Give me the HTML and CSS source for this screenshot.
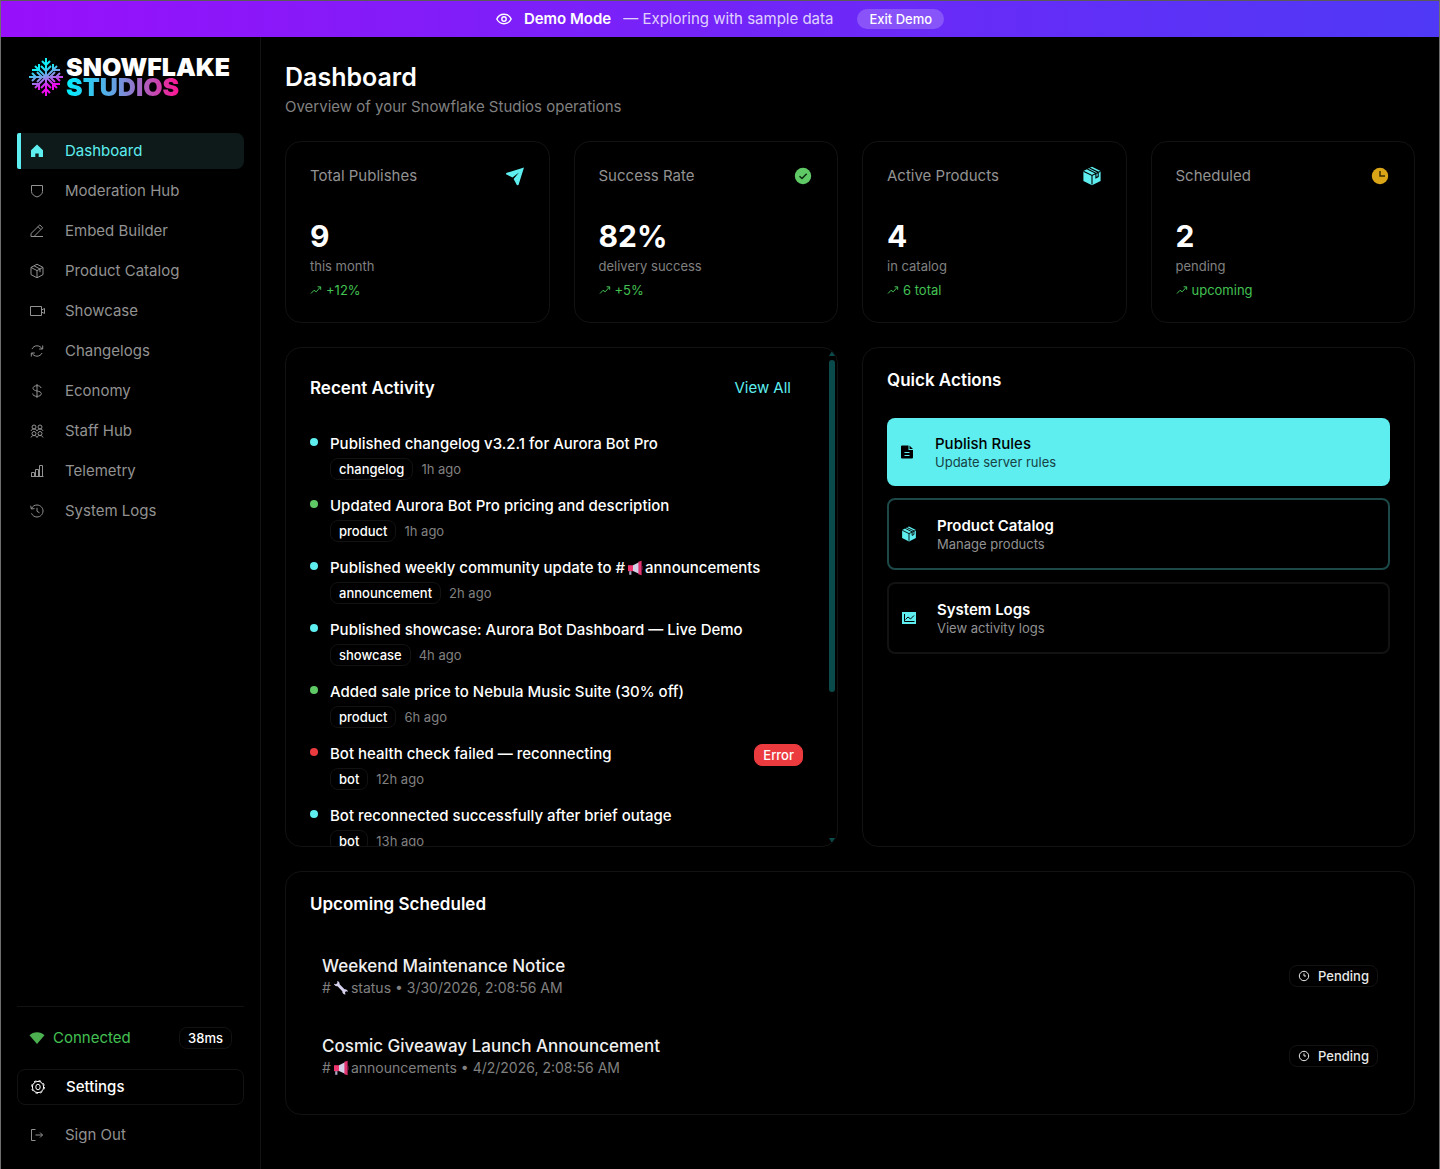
FILE: index.html
```html
<!DOCTYPE html>
<html lang="en">
<head>
  <meta charset="UTF-8">
  <meta name="viewport" content="width=device-width, initial-scale=1.0">
  <title>Snowflake Studios - Dashboard</title>
  <link rel="stylesheet" href="styles.css">
</head>
<body>
  <!-- Shared icons -->
  <svg class="sprite" aria-hidden="true">
    <symbol id="i-box" viewBox="0 0 16 16">
      <path d="M8 1.2 14 4.4v7.2L8 14.800 2 11.6V4.4zM2 4.4l6 3.2 6-3.2M8 7.6v7.2M5 2.8l6 3.200v3.200"/>
    </symbol>
    <symbol id="i-box-fill" viewBox="0 0 20 20">
      <path fill="currentColor" stroke="none" d="M10 .7 18.600 5v10L10 19.300 1.400 15V5z"/>
      <path fill="none" stroke="#000" stroke-width="1.100" d="M1.400 5.200 10 9.500l8.600-4.300M10 9.500v9M5.300 3l8.600 4.300v4.500l2.300-1.200V6.200L7.600 1.900"/>
    </symbol>
    <symbol id="i-trend" viewBox="0 0 12 12">
      <path d="m1 9.500 3-3.200 2.200 1.500L10.500 3M7.600 2.800h3.100v3"/>
    </symbol>
    <symbol id="i-clock" viewBox="0 0 12 12">
      <circle cx="6" cy="6" r="4.700"/><path d="M6 3.400V6h2"/>
    </symbol>
    <symbol id="i-horn" viewBox="0 0 16 16">
      <path fill="#d3d0e8" d="M6 5.200 12 2.200v11.600L6 11z"/>
      <path fill="#f0366f" d="M1 5.200h5v6H1z"/>
      <path fill="#a9a5c4" d="M2.200 11.200h2.200v3.600H2.200z"/>
      <path fill="#e0336f" d="M11.400 1.800 14.600.8v14.400l-3.200-1z"/>
      <path fill="#8c1f58" d="M14.400 6h1.100v4h-1.100z"/>
    </symbol>
    <symbol id="i-wrench" viewBox="0 0 16 16">
      <path fill="#d6d1ec" d="M4.200 1.100c1.600.3 2.600 1.600 2.400 3.100l4.900 5.100c1.600-.4 3.200.6 3.500 2.400l-2-.4-1 1 .5 2.100c-1.900.1-3.400-1.400-3.200-3.200L4.500 6.200C2.900 6.600 1.300 5.600 1 3.800l2 .5 1.400-1.200z"/>
    </symbol>
  </svg>

  <div class="demo-banner">
    <svg class="icon" viewBox="0 0 16 16"><path stroke-width="1.400" d="M.8 8C2.300 4.900 4.900 3.300 8 3.300S13.700 4.900 15.200 8C13.700 11.100 11.100 12.700 8 12.700S2.300 11.100.8 8z"/><circle cx="8" cy="8" r="2.200" stroke-width="1.400"/></svg>
    <strong>Demo Mode</strong>
    <span>— Exploring with sample data</span>
    <button type="button" class="exit-demo">Exit Demo</button>
  </div>

  <div class="layout">
    <aside class="sidebar">
      <a href="#" class="logo">
        <svg class="flake" viewBox="0 0 36 40">
          <defs>
            <linearGradient id="flake-color" gradientUnits="userSpaceOnUse" x1="12" y1="4" x2="24" y2="36">
              <stop offset="0.2" stop-color="#12eef5"/>
              <stop offset="0.5" stop-color="#8a92ea"/>
              <stop offset="0.8" stop-color="#f00af0"/>
            </linearGradient>
          </defs>
          <g fill="none" stroke="url(#flake-color)" stroke-width="2">
            <path d="M18 1v38M14 4l4 4 4-4M13 9l5 5 5-5M14 36l4-4 4 4M13 31l5-5 5 5"/>
            <path d="M1 20h34M4 16l4 4-4 4M9 15l5 5-5 5M32 16l-4 4 4 4M27 15l-5 5 5 5"/>
            <path d="M7 9l22 22M29 9 7 31M11 7v6H4M25 7v6h7M11 33v-6H4M25 33v-6h7"/>
          </g>
        </svg>
        <span class="logo-text">
          <span>SNOWFLAKE</span>
          <span class="logo-studios">STUDIOS</span>
        </span>
      </a>

      <nav class="nav">
        <a href="#" class="nav-item active">
          <svg class="icon" viewBox="0 0 16 16"><path fill="currentColor" stroke="none" d="M8 1.600 14 7.200V14H9.700v-3.600H6.300V14H2V7.200z"/></svg>
          Dashboard
        </a>
        <a href="#" class="nav-item">
          <svg class="icon" viewBox="0 0 16 16"><path d="M2.500 2.500h11v6c0 2.600-2.500 4.500-5.500 5.500-3-1-5.500-2.900-5.500-5.500z"/></svg>
          Moderation Hub
        </a>
        <a href="#" class="nav-item">
          <svg class="icon" viewBox="0 0 16 16"><path d="M2 13.500V10.500L10.800 1.900l2.900 2.900L5 13.500zM9 3.700l2.900 2.900M5 13.500h9"/></svg>
          Embed Builder
        </a>
        <a href="#" class="nav-item">
          <svg class="icon"><use href="#i-box"/></svg>
          Product Catalog
        </a>
        <a href="#" class="nav-item">
          <svg class="icon" viewBox="0 0 16 16"><path d="M1.500 3.500h11v9h-11zM12.500 7l3-1.500v5l-3-1.500"/></svg>
          Showcase
        </a>
        <a href="#" class="nav-item">
          <svg class="icon" viewBox="0 0 16 16"><path d="M3 6c.9-2 2.800-3.200 5-3.200 2.300 0 4.200 1.300 5.200 3.200M13.700 2.500V6h-3.500M13 10c-.9 2-2.800 3.200-5 3.200-2.300 0-4.200-1.300-5.200-3.200M2.300 13.500V10h3.500"/></svg>
          Changelogs
        </a>
        <a href="#" class="nav-item">
          <svg class="icon" viewBox="0 0 16 16"><path d="M8 1v14M12 5c0-1.500-1.700-2.300-4-2.300S4 3.700 4 5.300C4 8.800 12.300 7.200 12.300 10.700c0 1.700-1.800 2.600-4.300 2.600s-4.300-1-4.300-2.800"/></svg>
          Economy
        </a>
        <a href="#" class="nav-item">
          <svg class="icon" viewBox="0 0 16 16"><circle cx="5" cy="4" r="2"/><circle cx="11" cy="4" r="2"/><circle cx="5" cy="10.500" r="2"/><circle cx="11" cy="10.500" r="2"/><path d="M2 8c.3-1.300 1.500-2 3-2s2.700.7 3 2c.3-1.300 1.500-2 3-2s2.700.7 3 2M2 14.500c.3-1.300 1.500-2 3-2s2.700.7 3 2c.3-1.300 1.500-2 3-2s2.700.7 3 2"/></svg>
          Staff Hub
        </a>
        <a href="#" class="nav-item">
          <svg class="icon" viewBox="0 0 16 16"><path d="M2 13.500h12.500M2.500 13.500v-4h3v4M6.500 13.500v-7h3v7M10.500 13.500v-11h3v11"/></svg>
          Telemetry
        </a>
        <a href="#" class="nav-item">
          <svg class="icon" viewBox="0 0 16 16"><path d="M2.500 5.500C3.500 3.300 5.600 2 8 2c3.300 0 6 2.700 6 6s-2.700 6-6 6c-2.500 0-4.600-1.500-5.500-3.700M1.700 2.800l.6 3.200 3.200-.4M8 4.800V8.300l2.500 1.500"/></svg>
          System Logs
        </a>
      </nav>

      <div class="sidebar-footer">
        <div class="connection">
          <svg class="icon" viewBox="0 0 16 16"><path fill="#4caf50" stroke="none" d="M.5 5.200C2.500 3.200 5 2.200 8 2.200s5.500 1 7.500 3L8 14z"/></svg>
          <span>Connected</span>
          <span class="badge">38ms</span>
        </div>
        <a href="#" class="nav-item settings">
          <svg class="icon" viewBox="0 0 16 16"><circle cx="8" cy="8" r="5.600"/><circle cx="8" cy="8" r="6.400" stroke-dasharray="2.500 2.520"/><ellipse cx="8" cy="8" rx="2.200" ry="2.800"/></svg>
          Settings
        </a>
        <a href="#" class="nav-item">
          <svg class="icon" viewBox="0 0 16 16"><path d="M6.500 2.500h-4v11h4M6.500 8h7M11 5.500 13.500 8 11 10.500"/></svg>
          Sign Out
        </a>
      </div>
    </aside>

    <main class="main">
      <header class="page-header">
        <h1>Dashboard</h1>
        <p>Overview of your Snowflake Studios operations</p>
      </header>

      <section class="stats">
        <article class="card stat">
          <div class="stat-head">
            <h2>Total Publishes</h2>
            <svg class="stat-icon cyan" viewBox="0 0 20 20"><path fill="currentColor" d="M19 1.500 13.500 19l-1.500.2-3.400-6.200L14 6.500l-6.500 5L1 8.200 1.200 7z"/></svg>
          </div>
          <div class="stat-value">9</div>
          <div class="stat-note">this month</div>
          <div class="stat-trend"><svg class="icon"><use href="#i-trend"/></svg>+12%</div>
        </article>
        <article class="card stat">
          <div class="stat-head">
            <h2>Success Rate</h2>
            <svg class="stat-icon green" viewBox="0 0 20 20"><circle cx="10" cy="10" r="8.200" fill="currentColor"/><path fill="none" stroke="#0b2a0e" stroke-width="1.500" d="m6.500 10.200 2.500 2.300 4.700-4.800"/></svg>
          </div>
          <div class="stat-value">82%</div>
          <div class="stat-note">delivery success</div>
          <div class="stat-trend"><svg class="icon"><use href="#i-trend"/></svg>+5%</div>
        </article>
        <article class="card stat">
          <div class="stat-head">
            <h2>Active Products</h2>
            <svg class="stat-icon cyan"><use href="#i-box-fill"/></svg>
          </div>
          <div class="stat-value">4</div>
          <div class="stat-note">in catalog</div>
          <div class="stat-trend"><svg class="icon"><use href="#i-trend"/></svg>6 total</div>
        </article>
        <article class="card stat">
          <div class="stat-head">
            <h2>Scheduled</h2>
            <svg class="stat-icon yellow" viewBox="0 0 20 20"><circle cx="10" cy="10" r="8.200" fill="currentColor"/><path fill="none" stroke="#3d2d00" stroke-width="1.500" d="M10 5v5h5"/></svg>
          </div>
          <div class="stat-value">2</div>
          <div class="stat-note">pending</div>
          <div class="stat-trend"><svg class="icon"><use href="#i-trend"/></svg>upcoming</div>
        </article>
      </section>

      <div class="panels">
        <section class="card activity">
          <div class="card-head">
            <h2>Recent Activity</h2>
            <button type="button" class="view-all">View All</button>
          </div>
          <ul class="activity-list">
            <li>
              <span class="dot cyan"></span>
              <div class="activity-body">
                <p>Published changelog v3.2.1 for Aurora Bot Pro</p>
                <div class="meta"><span class="badge">changelog</span>1h ago</div>
              </div>
            </li>
            <li>
              <span class="dot green"></span>
              <div class="activity-body">
                <p>Updated Aurora Bot Pro pricing and description</p>
                <div class="meta"><span class="badge">product</span>1h ago</div>
              </div>
            </li>
            <li>
              <span class="dot cyan"></span>
              <div class="activity-body">
                <p>Published weekly community update to #<svg class="emoji"><use href="#i-horn"/></svg>announcements</p>
                <div class="meta"><span class="badge">announcement</span>2h ago</div>
              </div>
            </li>
            <li>
              <span class="dot cyan"></span>
              <div class="activity-body">
                <p>Published showcase: Aurora Bot Dashboard — Live Demo</p>
                <div class="meta"><span class="badge">showcase</span>4h ago</div>
              </div>
            </li>
            <li>
              <span class="dot green"></span>
              <div class="activity-body">
                <p>Added sale price to Nebula Music Suite (30% off)</p>
                <div class="meta"><span class="badge">product</span>6h ago</div>
              </div>
            </li>
            <li>
              <span class="dot red"></span>
              <div class="activity-body">
                <p>Bot health check failed — reconnecting</p>
                <div class="meta"><span class="badge">bot</span>12h ago</div>
              </div>
              <span class="badge error">Error</span>
            </li>
            <li>
              <span class="dot cyan"></span>
              <div class="activity-body">
                <p>Bot reconnected successfully after brief outage</p>
                <div class="meta"><span class="badge">bot</span>13h ago</div>
              </div>
            </li>
          </ul>
          <div class="scrollbar" aria-hidden="true">
            <span class="arrow-up"></span>
            <span class="track"><span class="thumb"></span></span>
            <span class="arrow-down"></span>
          </div>
        </section>

        <section class="card">
          <div class="card-head">
            <h2>Quick Actions</h2>
          </div>
          <div class="actions">
            <button type="button" class="action primary">
              <svg class="icon" viewBox="0 0 16 16"><path fill="currentColor" stroke="none" d="M3 1.500h6.500V6H14v7.500a1 1 0 0 1-1 1H3a1 1 0 0 1-1-1v-11a1 1 0 0 1 1-1zM10.500 1.500 14 5h-3.500z"/><path stroke="#5eeef0" d="M5.500 8.500h5M5.500 11.500h5"/></svg>
              <span class="action-text">
                <strong>Publish Rules</strong>
                <small>Update server rules</small>
              </span>
            </button>
            <button type="button" class="action accent">
              <svg class="icon cyan"><use href="#i-box-fill"/></svg>
              <span class="action-text">
                <strong>Product Catalog</strong>
                <small>Manage products</small>
              </span>
            </button>
            <button type="button" class="action">
              <svg class="icon cyan" viewBox="0 0 16 16"><path fill="currentColor" stroke="none" d="M1 2h14v12H1z"/><path stroke="#000" d="M3.500 4v7.500h10M4.500 9.500 7 7l2.500 2 3.500-3.500"/></svg>
              <span class="action-text">
                <strong>System Logs</strong>
                <small>View activity logs</small>
              </span>
            </button>
          </div>
        </section>
      </div>

      <section class="card">
        <div class="card-head">
          <h2>Upcoming Scheduled</h2>
        </div>
        <ul class="schedule">
          <li>
            <div>
              <h3>Weekend Maintenance Notice</h3>
              <p>#<svg class="emoji"><use href="#i-wrench"/></svg>status • 3/30/2026, 2:08:56 AM</p>
            </div>
            <span class="badge pending"><svg class="icon"><use href="#i-clock"/></svg>Pending</span>
          </li>
          <li>
            <div>
              <h3>Cosmic Giveaway Launch Announcement</h3>
              <p>#<svg class="emoji"><use href="#i-horn"/></svg>announcements • 4/2/2026, 2:08:56 AM</p>
            </div>
            <span class="badge pending"><svg class="icon"><use href="#i-clock"/></svg>Pending</span>
          </li>
        </ul>
      </section>
    </main>
  </div>
</body>
</html>
```

FILE: styles.css
```css
/* General reset and body styling */
* {
  margin: 0;
  padding: 0;
  box-sizing: border-box;
}

body {
  display: flex;
  flex-direction: column;
  min-height: 100vh;
  font-family: "Inter", sans-serif;
  font-size: 15px;
  line-height: 20px;
  color: #fff;
  background-color: #000;
  border: 1px solid #6e6e6e;
  border-top-color: #5a5a5a;
  border-bottom: none;
}

a {
  color: inherit;
  text-decoration: none;
}

button {
  font: inherit;
  color: inherit;
  background: none;
  border: none;
  cursor: pointer;
}

ul {
  list-style: none;
}

.sprite {
  display: none;
}

/* Icons */
.icon {
  width: 16px;
  height: 16px;
  flex-shrink: 0;
  fill: none;
  stroke: currentColor;
}

.emoji {
  width: 16px;
  height: 16px;
  margin: 0 2px;
  vertical-align: -3px;
}

.cyan { color: #5eeef0; }
.green { color: #5fc966; }
.yellow { color: #daa517; }
.red { color: #ec3b3f; }

/* Demo banner */
.demo-banner {
  display: flex;
  align-items: center;
  justify-content: center;
  gap: 12px;
  height: 36px;
  background: linear-gradient(to right, #9810fa, #4f39f6);
}

.demo-banner strong {
  font-weight: 600;
}

.demo-banner span {
  color: rgba(255, 255, 255, 0.8);
}

.exit-demo {
  margin-left: 12px;
  padding: 2px 12px;
  border-radius: 10px;
  background-color: rgba(255, 255, 255, 0.2);
  font-size: 13px;
  font-weight: 500;
  line-height: 16px;
}

/* Sidebar */
.layout {
  display: flex;
  flex: 1;
}

.sidebar {
  display: flex;
  flex-direction: column;
  width: 260px;
  flex-shrink: 0;
  padding: 16px;
  border-right: 1px solid #121212;
}

.logo {
  display: flex;
  align-items: center;
  gap: 2px;
  height: 48px;
  padding-left: 11px;
}

.flake {
  width: 36px;
  height: 40px;
}

.logo-text {
  display: flex;
  flex-direction: column;
  align-items: flex-start;
  font-size: 25px;
  font-weight: 900;
  line-height: 20px;
}

.logo-studios {
  background: linear-gradient(to right, #00f0ff, #6a9be0 45%, #ff1493);
  -webkit-background-clip: text;
  background-clip: text;
  color: transparent;
}

.nav {
  display: flex;
  flex-direction: column;
  gap: 4px;
  margin-top: 32px;
}

.nav-item {
  display: flex;
  align-items: center;
  gap: 20px;
  height: 36px;
  padding: 0 12px;
  border-radius: 8px;
  color: #929292;
}

.nav-item.active {
  color: #5eeef0;
  background: linear-gradient(to right, #5eeef0 4px, #0d1a19 4px);
  border-radius: 2px 8px 8px 2px;
}

.sidebar-footer {
  display: flex;
  flex-direction: column;
  gap: 12px;
  margin-top: auto;
  padding-top: 16px;
  border-top: 1px solid #121212;
}

.connection {
  display: flex;
  align-items: center;
  gap: 8px;
  padding: 4px 12px 8px;
  color: #43c153;
}

.connection .badge {
  margin-left: auto;
}

.nav-item.settings {
  border: 1px solid #121212;
  color: #fff;
  font-weight: 500;
}

/* Badges */
.badge {
  display: inline-flex;
  align-items: center;
  height: 22px;
  padding: 0 8px;
  border: 1px solid #121212;
  border-radius: 8px;
  color: #fff;
  font-size: 13px;
  font-weight: 500;
  line-height: 16px;
}

.badge.error {
  background-color: #ec3b3f;
  border-color: #ec3b3f;
}

.badge.pending {
  gap: 8px;
  color: #e8e8e8;
}

.badge .icon {
  width: 12px;
  height: 12px;
}

/* Main content */
.main {
  display: flex;
  flex-direction: column;
  flex: 1;
  gap: 24px;
  min-width: 0;
  padding: 24px;
}

.page-header h1 {
  margin-bottom: 4px;
  font-size: 25px;
  font-weight: 600;
  line-height: 32px;
}

.page-header p {
  color: #808080;
}

.card {
  padding: 24px;
  border: 1px solid #121212;
  border-radius: 16px;
}

.card-head {
  display: flex;
  align-items: center;
  justify-content: space-between;
  margin-bottom: 30px;
}

.card-head h2 {
  font-size: 17px;
  font-weight: 600;
  line-height: 16px;
}

/* Stat cards */
.stats {
  display: grid;
  grid-template-columns: repeat(4, 1fr);
  gap: 24px;
}

.stat-head {
  display: flex;
  justify-content: space-between;
  margin-bottom: 32px;
}

.stat-head h2 {
  font-size: 15px;
  font-weight: 400;
  color: #929292;
}

.stat-icon {
  width: 20px;
  height: 20px;
}

.stat-value {
  margin-bottom: 4px;
  font-size: 30px;
  font-weight: 700;
  line-height: 36px;
}

.stat-note {
  margin-bottom: 8px;
  font-size: 13px;
  line-height: 16px;
  color: #808080;
}

.stat-trend {
  display: flex;
  align-items: center;
  gap: 4px;
  font-size: 13px;
  line-height: 16px;
  color: #43c153;
}

.stat-trend .icon {
  width: 12px;
  height: 12px;
}

/* Activity and quick actions */
.panels {
  display: grid;
  grid-template-columns: repeat(2, 1fr);
  gap: 24px;
}

.activity {
  position: relative;
  height: 500px;
  padding-right: 34px;
  overflow: hidden;
}

.view-all {
  padding: 6px 12px;
  color: #5eeef0;
}

.activity-list {
  display: flex;
  flex-direction: column;
  gap: 16px;
}

.activity-list li {
  display: flex;
  align-items: flex-start;
  gap: 12px;
}

.dot {
  width: 8px;
  height: 8px;
  flex-shrink: 0;
  margin-top: 4px;
  border-radius: 50%;
  background-color: currentColor;
}

.activity-body {
  flex: 1;
  min-width: 0;
}

.activity-body p {
  height: 20px;
  margin-bottom: 4px;
  font-weight: 500;
}

.meta {
  display: flex;
  align-items: center;
  gap: 8px;
  font-size: 13px;
  line-height: 16px;
  color: #808080;
}

/* Scrollbar drawn over the right edge of the card */
.scrollbar {
  position: absolute;
  top: 0;
  right: 2px;
  bottom: 0;
  display: flex;
  flex-direction: column;
  gap: 4px;
  width: 6px;
  padding: 3px 0;
}

.arrow-up,
.arrow-down {
  height: 5px;
  background-color: #0a4a4b;
  clip-path: polygon(50% 0, 100% 100%, 0 100%);
}

.arrow-down {
  clip-path: polygon(0 0, 100% 0, 50% 100%);
}

.track {
  flex: 1;
}

.thumb {
  display: block;
  height: 70%;
  border-radius: 3px;
  background-color: #0a4a4b;
}

.actions {
  display: flex;
  flex-direction: column;
  gap: 12px;
}

.action {
  display: flex;
  align-items: center;
  gap: 20px;
  padding: 16px 12px;
  border: 2px solid #121212;
  border-radius: 8px;
  text-align: left;
}

.action.primary {
  border: none;
  color: #000;
  background-color: #5eeef0;
}

.action.accent {
  border-color: #1c4848;
}

.action-text {
  display: flex;
  flex-direction: column;
}

.action strong {
  font-weight: 600;
}

.action.primary strong {
  font-weight: 500;
}

.action small {
  font-size: 13px;
  line-height: 16px;
  color: #929292;
}

.action.primary small {
  color: #174244;
}

/* Upcoming scheduled */
.schedule {
  display: flex;
  flex-direction: column;
  gap: 12px;
}

.schedule li {
  display: flex;
  align-items: center;
  justify-content: space-between;
  padding: 12px;
}

.schedule h3 {
  font-size: 17px;
  font-weight: 500;
  line-height: 24px;
  color: #f0f0f0;
}

.schedule p {
  height: 20px;
  font-size: 14px;
  color: #808080;
}
```
